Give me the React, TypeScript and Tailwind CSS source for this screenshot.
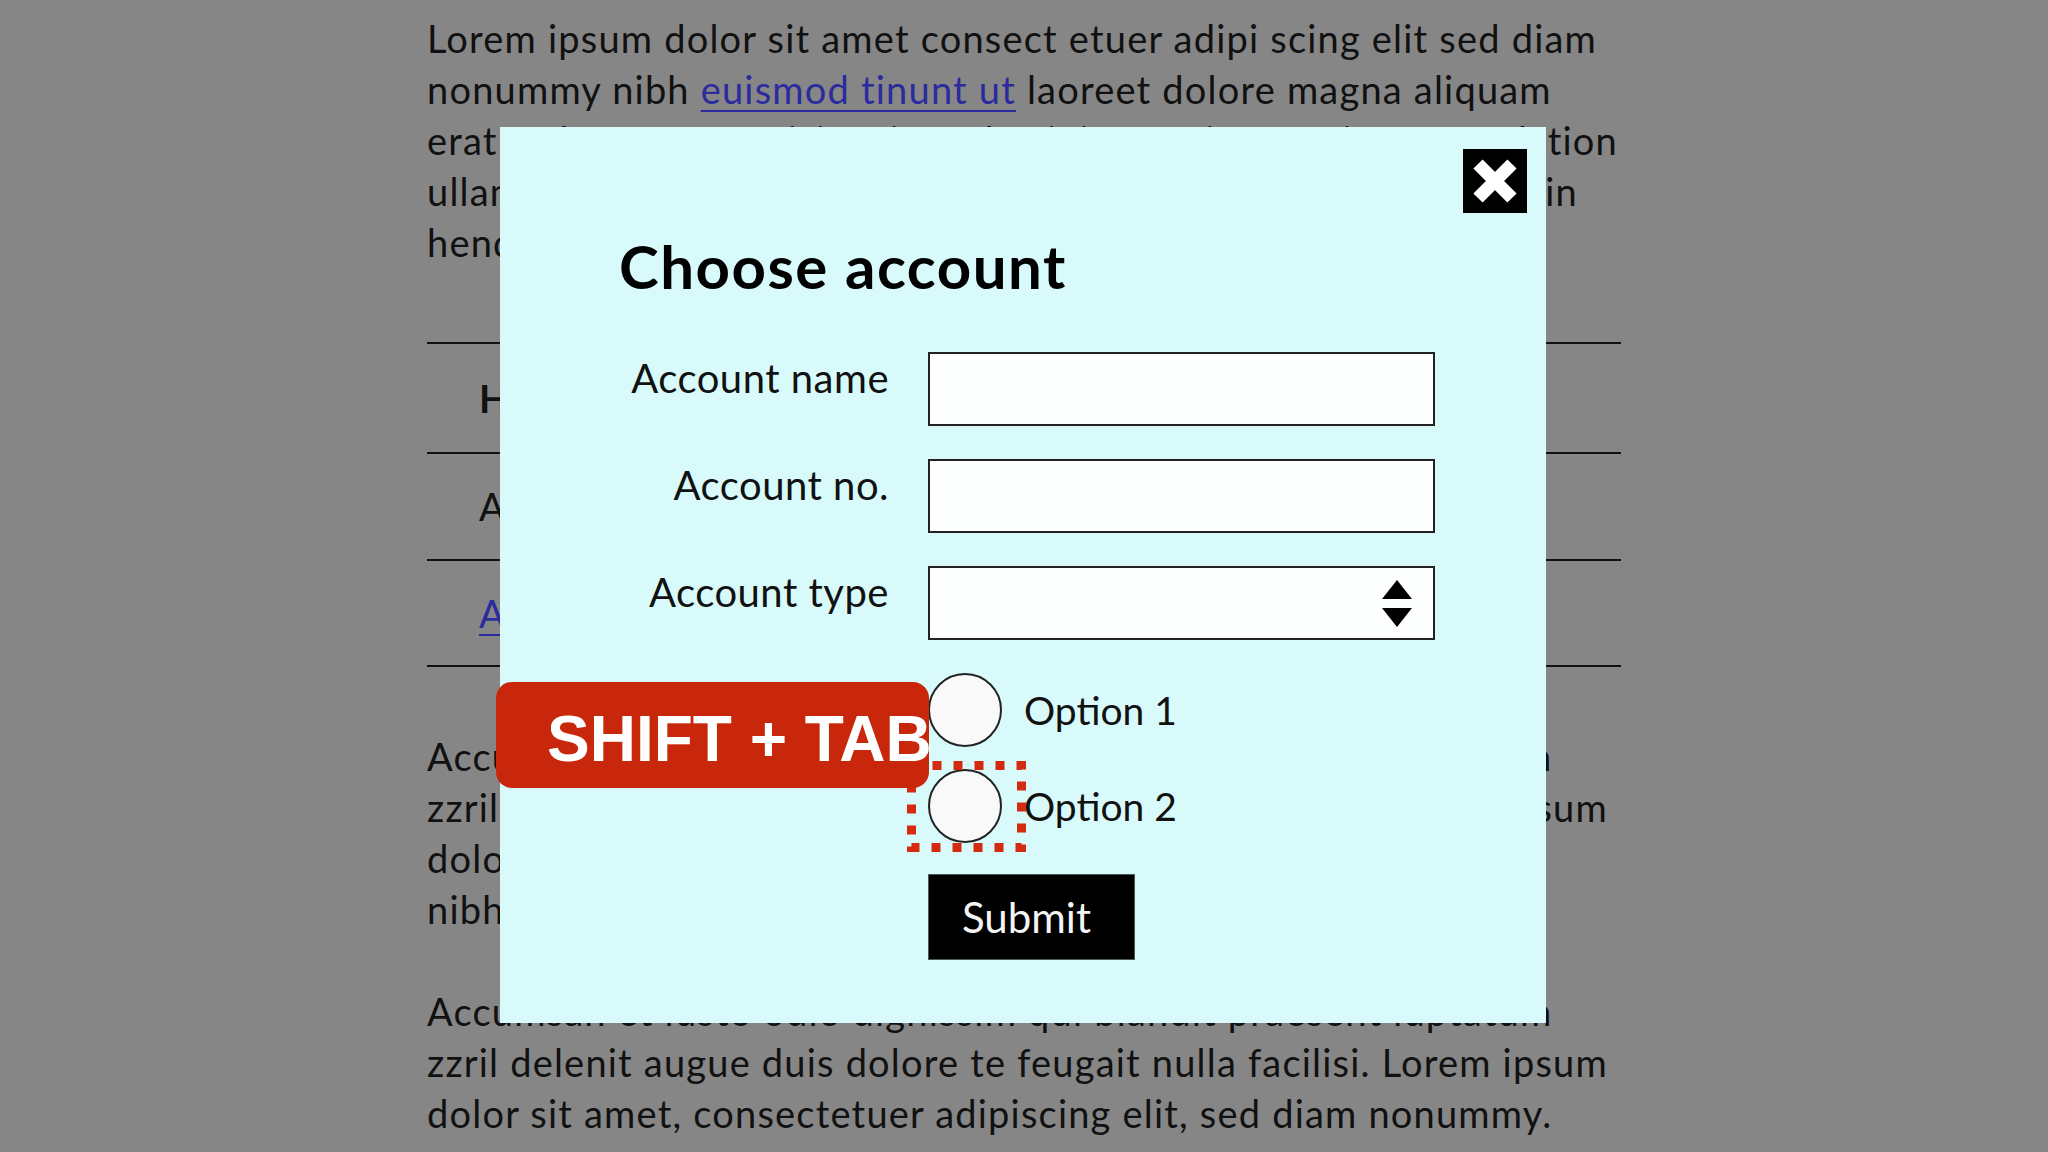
import React from 'react';

const line = 'block whitespace-nowrap';

function CloseIcon() {
  return (
    <svg width="44" height="44" viewBox="0 0 44 44" aria-hidden="true">
      <path d="M5 5 L39 39 M39 5 L5 39" stroke="white" strokeWidth="13" strokeLinecap="butt" fill="none" />
    </svg>
  );
}

function SelectArrows() {
  return (
    <svg width="30" height="47" viewBox="0 0 30 47" aria-hidden="true">
      <path d="M15 0 L30 19 L0 19 Z" fill="black" />
      <path d="M0 28 L30 28 L15 47 Z" fill="black" />
    </svg>
  );
}

function Radio({ label, focused }: { label: string; focused?: boolean }) {
  return (
    <label className="flex items-center gap-[22px]">
      <span className="relative block h-[74px] w-[74px]">
        <span className="block h-full w-full rounded-full border-2 border-[#222] bg-[#f9f9f9]" />
        {focused && (
          <svg
            className="absolute -left-[21px] -top-[8px]"
            width="119"
            height="91"
            viewBox="0 0 119 91"
            aria-hidden="true"
          >
            <rect x="4.5" y="4.5" width="110" height="82" fill="none" stroke="#d32a10" strokeWidth="9" strokeDasharray="9 12" />
          </svg>
        )}
      </span>
      <span className="text-[39px] leading-none text-[#111]">{label}</span>
    </label>
  );
}

function AccountDialog() {
  const labelCls = 'self-start text-right text-[40px] leading-[52px] tracking-[0.5px] text-[#111]';
  const inputCls = 'h-[74px] w-[507px] border-2 border-[#222] bg-[#fdfefe]';

  return (
    <div className="absolute left-[500px] top-[127px] h-[896px] w-[1046px] bg-[#d8fafa]">
      <button className="absolute right-[19px] top-[22px] flex h-[64px] w-[64px] items-center justify-center bg-black">
        <CloseIcon />
      </button>

      <h2 className="ml-[119px] pt-[110px] text-[60px] font-bold leading-[58px] tracking-[1.5px] text-black">
        Choose account
      </h2>

      <form className="mt-[57px] grid grid-cols-[389px_507px] gap-x-[39px] gap-y-[33px]">
        <span className={labelCls}>Account name</span>
        <div className={inputCls} />

        <span className={labelCls}>Account no.</span>
        <div className={inputCls} />

        <span className={labelCls}>Account type</span>
        <div className={`${inputCls} flex items-center justify-end pr-[21px]`}>
          <SelectArrows />
        </div>

        <span />
        <div className="flex flex-col">
          <div className="flex flex-col gap-[22px]">
            <Radio label="Option 1" />
            <Radio label="Option 2" focused />
          </div>
          <button
            type="button"
            className="mt-[31px] h-[86px] w-[207px] border border-[#4a5a5a] bg-black pr-[10px] text-[42px] leading-none text-[#f4f4f4]"
          >
            Submit
          </button>
        </div>
      </form>

      {/* keyboard hint */}
      <div className="absolute -left-[4px] top-[555px] flex h-[106px] w-[433px] items-center whitespace-nowrap rounded-[16px] bg-[#c9270b] pl-[51px] pt-[8px] font-['Liberation_Sans',Arial,sans-serif] text-[64px] font-bold leading-none text-white">
        SHIFT + TAB
      </div>
    </div>
  );
}

export default function App() {
  return (
    <div className="relative h-[1152px] w-[2048px] overflow-hidden bg-[#868686] font-['Lato',sans-serif] text-[#111]">
      <div className="ml-[427px] w-[1194px] pt-[13px] text-[38px] leading-[51px] tracking-[1.2px]">
        <p>
          <span className={line}>Lorem ipsum dolor sit amet consect etuer adipi scing elit sed diam</span>
          <span className={line}>
            nonummy nibh{' '}
            <a href="#" className="text-[#2b2b9e] underline decoration-2 underline-offset-[6px]">
              euismod tinunt ut
            </a>{' '}
            laoreet dolore magna aliquam
          </span>
          <span className={`${line} w-[1191px] text-justify [text-align-last:justify]`}>
            erat volutpat. Ut wisi enim ad minim veniam, quis nostrud tion
          </span>
          <span className={`${line} w-[1151px] text-justify [text-align-last:justify]`}>
            ullamcorper suscipit lobortis nisl ut aliquip ex ea dolor in
          </span>
          <span className={line}>hendrerit in vulputate velit esse molestie</span>
        </p>

        <div className="mt-[74px] border-t-2 border-[#111]">
          <div className="grid h-[110px] grid-cols-3 items-center border-b-2 border-[#111] pl-[52px] font-bold">
            <span>Holder</span>
            <span>Number</span>
            <span>Type</span>
          </div>
          <div className="grid h-[107px] grid-cols-3 items-center border-b-2 border-[#111] pl-[52px]">
            <span>Alex Moss</span>
            <span>0042</span>
            <span>Saving</span>
          </div>
          <div className="grid h-[106px] grid-cols-3 items-center border-b-2 border-[#111] pl-[52px]">
            <a href="#" className="text-[#2b2b9e] underline decoration-2 underline-offset-[6px]">Add</a>
            <span />
            <span />
          </div>
        </div>

        <p className="mt-[64px]">
          <span className={line}>Accumsan et iusto odio dignissim qui blandit praesent luptatum</span>
          <span className={line}>zzril delenit augue duis dolore te feugait nulla facilisi. Lorem ipsum</span>
          <span className={line}>dolor sit amet, consectetuer adipiscing elit, sed diam nonummy</span>
          <span className={line}>nibh euismod tincidunt ut laoreet dolore.</span>
        </p>

        <p className="mt-[51px]">
          <span className={line}>Accumsan et iusto odio dignissim qui blandit praesent luptatum</span>
          <span className={line}>zzril delenit augue duis dolore te feugait nulla facilisi. Lorem ipsum</span>
          <span className={line}>dolor sit amet, consectetuer adipiscing elit, sed diam nonummy.</span>
        </p>
      </div>

      <AccountDialog />
    </div>
  );
}
